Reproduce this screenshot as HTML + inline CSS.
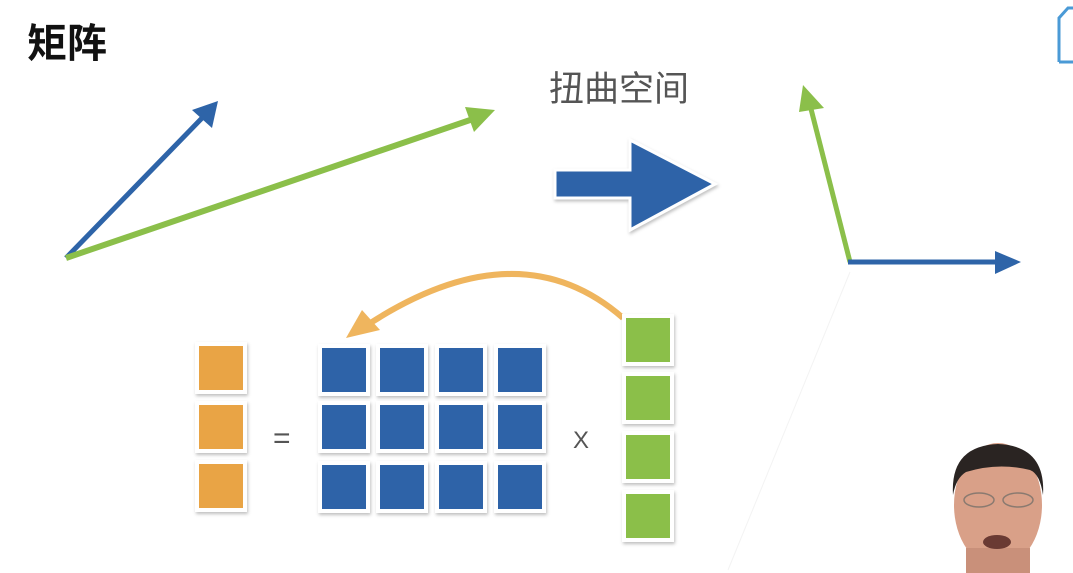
<!DOCTYPE html>
<html><head><meta charset="utf-8"><style>
html,body{margin:0;padding:0;background:#fff;width:1073px;height:573px;overflow:hidden}
svg{display:block}
</style></head><body>
<svg width="1073" height="573" viewBox="0 0 1073 573" xmlns="http://www.w3.org/2000/svg">
<defs>
<filter id="sh" x="-20%" y="-20%" width="140%" height="140%"><feDropShadow dx="1" dy="2" stdDeviation="1.5" flood-color="#000" flood-opacity="0.25"/></filter>
</defs>
<text x="27" y="57" font-family="'Liberation Sans','Noto Sans CJK SC',sans-serif" font-size="40" font-weight="bold" fill="#111">矩阵</text>
<text x="549" y="101" font-family="'Liberation Sans','Noto Sans CJK SC',sans-serif" font-size="35" fill="#555">扭曲空间</text>
<line x1="66" y1="258" x2="204" y2="116" stroke="#2e64a8" stroke-width="5"/>
<polygon points="218,101 212,128 192,110" fill="#2e64a8"/>
<line x1="66" y1="258" x2="476" y2="118" stroke="#8bbf4a" stroke-width="6"/>
<polygon points="495,110 474,132 465,107" fill="#8bbf4a"/>
<g filter="url(#sh)">
<polygon points="555,170 630,170 630,140 715,184 630,230 630,198 555,198" fill="#2e64a8" stroke="#fff" stroke-width="3"/>
</g>
<line x1="850" y1="262" x2="810" y2="105" stroke="#8bbf4a" stroke-width="5"/>
<polygon points="803,85 824,108 799,112" fill="#8bbf4a"/>
<line x1="848" y1="262" x2="1000" y2="262" stroke="#2e64a8" stroke-width="5"/>
<polygon points="1021,262 995,251 995,274" fill="#2e64a8"/>
<line x1="850" y1="272" x2="728" y2="570" stroke="#f3f3f3" stroke-width="1"/>
<path d="M623,318 Q520,228 372,322" fill="none" stroke="#efb55e" stroke-width="6"/>
<polygon points="346,338 380,330 362,310" fill="#efb55e"/>
<g filter="url(#sh)">
<rect x="195" y="342" width="52" height="52" fill="#fff"/><rect x="199" y="346" width="44" height="44" fill="#e9a445"/>
<rect x="195" y="401" width="52" height="52" fill="#fff"/><rect x="199" y="405" width="44" height="44" fill="#e9a445"/>
<rect x="195" y="460" width="52" height="52" fill="#fff"/><rect x="199" y="464" width="44" height="44" fill="#e9a445"/>
</g>
<text x="273" y="448" font-family="'Liberation Sans',sans-serif" font-size="30" fill="#555">=</text>
<g filter="url(#sh)" fill="#2e64a8">
<g id="row">
<rect x="318" y="344" width="52" height="52" fill="#fff"/><rect x="322" y="348" width="44" height="44"/>
<rect x="376" y="344" width="52" height="52" fill="#fff"/><rect x="380" y="348" width="44" height="44"/>
<rect x="435" y="344" width="52" height="52" fill="#fff"/><rect x="439" y="348" width="44" height="44"/>
<rect x="494" y="344" width="52" height="52" fill="#fff"/><rect x="498" y="348" width="44" height="44"/>
</g>
<use href="#row" y="57"/>
<use href="#row" y="117"/>
</g>
<text x="573" y="448" font-family="'Liberation Sans',sans-serif" font-size="24" fill="#555">X</text>
<g filter="url(#sh)" fill="#8bbf4a">
<rect x="622" y="314" width="52" height="52" fill="#fff"/><rect x="626" y="318" width="44" height="44"/>
<rect x="622" y="372" width="52" height="52" fill="#fff"/><rect x="626" y="376" width="44" height="44"/>
<rect x="622" y="431" width="52" height="52" fill="#fff"/><rect x="626" y="435" width="44" height="44"/>
<rect x="622" y="490" width="52" height="52" fill="#fff"/><rect x="626" y="494" width="44" height="44"/>
</g>
<path d="M1059,62 L1059,18 L1068,8 L1073,8 M1059,62 L1073,62" fill="none" stroke="#4a9ad6" stroke-width="3"/>
<ellipse cx="998" cy="505" rx="44" ry="62" fill="#d9a088"/>
<path d="M953,495 Q950,446 998,444 Q1046,446 1043,495 Q1040,474 1030,470 Q998,462 966,472 Q956,478 953,495Z" fill="#2a2422"/>
<rect x="966" y="548" width="64" height="25" fill="#c9907a"/>
<ellipse cx="979" cy="500" rx="15" ry="7" fill="none" stroke="#8a7a70" stroke-width="1.5"/>
<ellipse cx="1018" cy="500" rx="15" ry="7" fill="none" stroke="#8a7a70" stroke-width="1.5"/>
<ellipse cx="997" cy="542" rx="14" ry="7" fill="#6a3a33"/>
</svg>
</body></html>
